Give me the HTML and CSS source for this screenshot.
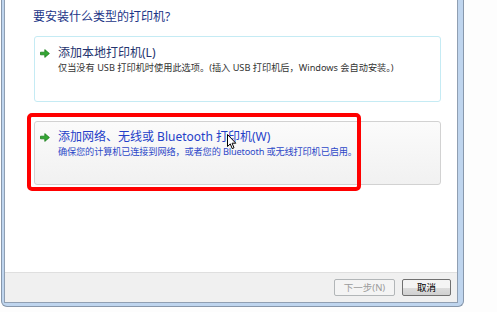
FILE: index.html
```html
<!DOCTYPE html>
<html lang="zh-CN">
<head>
    <meta charset="UTF-8">
    <title>添加打印机</title>
    <link rel="stylesheet" href="styles.css">
</head>
<body>
    <div class="window">
        <div class="client">
            <div class="content">
                <h1 class="heading">要安装什么类型的打印机?</h1>

                <div class="option option-default">
                    <svg class="arrow" width="10" height="9" viewBox="0 0 10 9">
                        <path d="M0.5 3.2 H4.8 V0.6 L9.4 4.5 L4.8 8.4 V5.8 H0.5 Z" fill="#33a833" stroke="#1d7d1d" stroke-width="0.8" stroke-linejoin="round"/>
                    </svg>
                    <div class="option-text">
                        <div class="option-title">添加本地打印机(L)</div>
                        <div class="option-desc">仅当没有 USB 打印机时使用此选项。(插入 USB 打印机后，Windows 会自动安装。)</div>
                    </div>
                </div>

                <div class="option option-hover">
                    <svg class="arrow" width="10" height="9" viewBox="0 0 10 9">
                        <path d="M0.5 3.2 H4.8 V0.6 L9.4 4.5 L4.8 8.4 V5.8 H0.5 Z" fill="#33a833" stroke="#1d7d1d" stroke-width="0.8" stroke-linejoin="round"/>
                    </svg>
                    <div class="option-text">
                        <div class="option-title">添加网络、无线或 Bluetooth 打印机(W)</div>
                        <div class="option-desc">确保您的计算机已连接到网络，或者您的 Bluetooth 或无线打印机已启用。</div>
                    </div>
                </div>
            </div>

            <div class="footer">
                <button class="btn btn-disabled">下一步(N)</button>
                <button class="btn">取消</button>
            </div>
        </div>
    </div>

    <!-- 标注框和鼠标 -->
    <div class="highlight"></div>
    <svg class="cursor" width="10" height="16" viewBox="0 0 10 16">
        <path d="M0.5 0.5 V12.5 L3.3 9.9 L5.2 14.6 L7 13.8 L5.1 9.2 H8.8 Z" fill="#fff" stroke="#000" stroke-width="1" stroke-linejoin="round"/>
    </svg>
</body>
</html>
```

FILE: styles.css
```css
body {
    margin: 0;
    background: #fdfdfd;
    font-family: "Noto Sans", "Noto Sans CJK SC", sans-serif;
    width: 497px;
    height: 312px;
    overflow: hidden;
    position: relative;
}
.window {
    margin-left: 1px;
    border: 1px solid #8797ab;
    border-top: none;
    background: #bfd5ee;
    padding: 0 5px 3px 2px;
    box-sizing: content-box;
    border-radius: 0 0 6px 6px;
    width: 454px;
    height: 303px;
}
.client {
    height: 302px;
    background: #fff;
    border: 1px solid #909fb2;
    border-top: none;
    display: flex;
    flex-direction: column;
}
.content {
    flex: 1;
    padding: 9px 0 0 28px;
}
.heading {
    margin: 0 0 11px;
    font-size: 12px;
    font-weight: normal;
    line-height: 16px;
    color: #1c3587;
}
.option {
    width: 407px;
    border-radius: 3px;
    border: 1px solid #c5ebf4;
    display: flex;
    align-items: flex-start;
    margin-left: 1px;
    box-sizing: border-box;
}
.option-default {
    height: 66px;
    background: #fff;
    margin-bottom: 19px;
}
.option-hover {
    height: 64px;
    border-color: #d2d2d2;
    background: linear-gradient(#fbfbfb, #f1f1f1);
}
.arrow {
    margin: 12px 8px 0 5px;
    flex-shrink: 0;
}
.option-text {
    padding-top: 8px;
}
.option-title {
    font-size: 12px;
    line-height: 16px;
    color: #24336e;
}
.option-desc {
    font-size: 9.2px;
    line-height: 13px;
    color: #333;
}
.option-hover .arrow {
    margin-top: 11px;
}
.option-hover .option-text {
    padding-top: 7px;
}
.option-hover .option-title {
    color: #2440c8;
}
.option-hover .option-desc {
    color: #2d48c8;
    letter-spacing: -0.15px;
}
.footer {
    height: 29px;
    border-top: 1px solid #dfdfdf;
    background: #f0f0f0;
    display: flex;
    align-items: center;
    justify-content: flex-end;
    gap: 7px;
    padding-right: 6px;
}
.btn {
    height: 17px;
    padding: 0;
    font-family: "Noto Sans", "Noto Sans CJK SC", sans-serif;
    font-size: 9.5px;
    line-height: 15px;
    border-radius: 2px;
    border: 1px solid #707070;
    background: linear-gradient(#f4f4f4 50%, #dddddd 50%, #d0d0d0);
    color: #000;
    width: 49px;
}
.btn-disabled {
    width: 61px;
    border-color: #b2b6b8;
    background: #f4f4f4;
    color: #9b9b9b;
}
.highlight {
    position: absolute;
    left: 27px;
    top: 113px;
    width: 326px;
    height: 70px;
    border: 4px solid #ff0000;
    border-radius: 5px;
}
.cursor {
    position: absolute;
    left: 227px;
    top: 134px;
}
```
